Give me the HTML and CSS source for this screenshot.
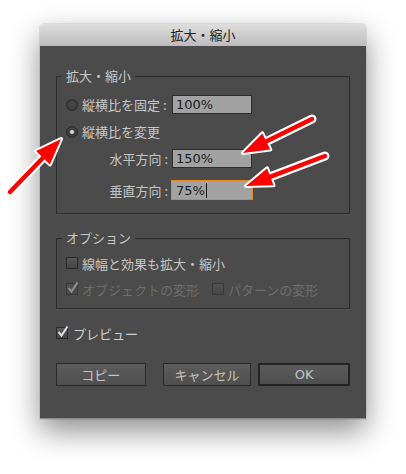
FILE: index.html
```html
<!DOCTYPE html>
<html lang="ja">
<head>
    <meta charset="UTF-8">
    <title>拡大・縮小</title>
    <link rel="stylesheet" href="styles.css">
</head>
<body>
    <div class="dialog">
        <div class="titlebar">拡大・縮小</div>
        <div class="dialog-body">
            <fieldset class="group">
                <legend>拡大・縮小</legend>
                <div class="row">
                    <span class="radio"></span>
                    <span class="label">縦横比を固定 :</span>
                    <span class="field">100%</span>
                </div>
                <div class="row row-gap">
                    <span class="radio checked"></span>
                    <span class="label">縦横比を変更</span>
                </div>
                <div class="row row-gap">
                    <span class="label indent">水平方向 :</span>
                    <span class="field">150%</span>
                </div>
                <div class="row row-last">
                    <span class="label indent">垂直方向 :</span>
                    <span class="field focused">75%<span class="caret"></span></span>
                </div>
            </fieldset>

            <fieldset class="group group-options">
                <legend>オプション</legend>
                <div class="row small">
                    <span class="check"></span>
                    <span class="label">線幅と効果も拡大・縮小</span>
                </div>
                <div class="row small disabled">
                    <span class="check">
                        <svg width="14" height="14" viewBox="0 0 14 14"><path d="M2.5 7 L5.5 10.5 L11.5 1.5" fill="none" stroke="#d8d8d8" stroke-width="2"/></svg>
                    </span>
                    <span class="label">オブジェクトの変形</span>
                    <span class="check spaced"></span>
                    <span class="label">パターンの変形</span>
                </div>
            </fieldset>

            <div class="row small preview">
                <span class="check">
                    <svg width="14" height="14" viewBox="0 0 14 14"><path d="M2.5 7 L5.5 10.5 L11.5 1.5" fill="none" stroke="#e0e0e0" stroke-width="2"/></svg>
                </span>
                <span class="label">プレビュー</span>
            </div>

            <div class="buttons">
                <div class="button copy">コピー</div>
                <div class="button cancel">キャンセル</div>
                <div class="button ok">OK</div>
            </div>
        </div>
    </div>

    <!-- callout arrows drawn over the screenshot -->
    <svg class="arrows" width="406" height="474" viewBox="0 0 406 474">
        <g stroke="#fff" stroke-linejoin="round" stroke-linecap="round" fill="#fff">
            <line x1="10" y1="192" x2="43" y2="157.7" stroke-width="9"/>
            <polygon points="61,139 49.9,164.4 36.1,151" stroke-width="4"/>
            <line x1="312" y1="119" x2="266.3" y2="141.5" stroke-width="9"/>
            <polygon points="243,153 270.3,149.6 262.3,133.4" stroke-width="4"/>
            <line x1="325" y1="156" x2="270.3" y2="176.8" stroke-width="9"/>
            <polygon points="246,186 273.5,185.2 267.1,168.4" stroke-width="4"/>
        </g>
        <g stroke="#f00" stroke-linecap="round" fill="#f00">
            <line x1="10" y1="192" x2="45" y2="155.7" stroke-width="4.5"/>
            <polygon points="61,139 49.9,164.4 36.1,151" stroke="none"/>
            <line x1="312" y1="119" x2="264" y2="142.6" stroke-width="4.5"/>
            <polygon points="243,153 270.3,149.6 262.3,133.4" stroke="none"/>
            <line x1="325" y1="156" x2="268" y2="177.7" stroke-width="4.5"/>
            <polygon points="246,186 273.5,185.2 267.1,168.4" stroke="none"/>
        </g>
    </svg>
</body>
</html>
```

FILE: styles.css
```css
body {
    box-sizing: border-box;
    min-height: 474px;
    margin: 0;
    padding: 24px 0 0 40px;
    background-color: #fff;
    font-family: "Noto Sans CJK JP", sans-serif;
    font-size: 13px;
}

.dialog {
    width: 326px;
    height: 395px;
    border-radius: 4px 4px 0 0;
    box-shadow: 0 12px 30px rgba(0, 0, 0, 0.45), 0 0 0 1px rgba(0, 0, 0, 0.08);
}

.titlebar {
    height: 22px;
    line-height: 22px;
    text-align: center;
    color: #222;
    background: linear-gradient(#dedede, #bcbcbc);
    border-radius: 4px 4px 0 0;
}

.dialog-body {
    box-sizing: border-box;
    height: 373px;
    padding: 22px 16px 0;
    background-color: #4b4b4b;
    border-bottom: 1px solid #8c8c8c;
    color: #c6c6c6;
}

.group {
    margin: 0;
    padding: 11px 9px 13px;
    border: 1px solid #2c2c2c;
    box-shadow: 0 1px 0 rgba(255, 255, 255, 0.06);
}

.group legend {
    margin-left: -4px;
    padding: 0 4px;
    line-height: 16px;
    color: #c8c8c8;
}

.group-options {
    margin-top: 16px;
    padding: 9px 9px 11px;
}

.row {
    display: flex;
    align-items: center;
    height: 19px;
}

.row-gap {
    margin-top: 8px;
}

.row-last {
    margin-top: 12px;
    height: 20px;
}

.row.small {
    height: 16px;
}

.group-options .row + .row {
    margin-top: 10px;
}

.label {
    white-space: nowrap;
}

.radio + .label {
    box-sizing: border-box;
    width: 90px;
    margin-left: 4px;
}

.label.indent {
    box-sizing: border-box;
    width: 106px;
    padding-right: 4px;
    text-align: right;
}

.radio {
    box-sizing: border-box;
    display: flex;
    align-items: center;
    justify-content: center;
    width: 12px;
    height: 12px;
    border: 1px solid #2a2a2a;
    border-radius: 50%;
    background: radial-gradient(circle at 50% 40%, #4a4a4a, #363636);
}

.radio.checked::after {
    content: "";
    width: 4px;
    height: 4px;
    border-radius: 50%;
    background-color: #dcdcdc;
}

.field {
    box-sizing: border-box;
    display: flex;
    align-items: center;
    width: 80px;
    height: 19px;
    padding-left: 3px;
    background-color: #a2a2a2;
    border: 1px solid #2d2d2d;
    color: #1c1c1c;
    font-family: "DejaVu Sans", sans-serif;
    font-size: 13px;
}

.field.focused {
    width: 82px;
    height: 20px;
    margin-left: -1px;
    padding-left: 4px;
    border-color: #e3881d;
}

.caret {
    width: 1px;
    height: 15px;
    margin-left: 1px;
    background-color: #111;
}

.check {
    box-sizing: border-box;
    position: relative;
    flex: none;
    width: 12px;
    height: 12px;
    border: 1px solid #2a2a2a;
    background: linear-gradient(#595959, #444);
}

.check svg {
    position: absolute;
    left: -1px;
    top: -3px;
}

.check + .label {
    margin-left: 4px;
}

.check.spaced {
    margin-left: 13px;
}

.disabled {
    color: #6e6e6e;
}

.disabled .check {
    opacity: 0.5;
}

.preview {
    margin-top: 16px;
    color: #d0d0d0;
}

.preview .check + .label {
    margin-left: 5px;
}

.buttons {
    display: flex;
    margin-top: 22px;
}

.button {
    box-sizing: border-box;
    height: 23px;
    line-height: 21px;
    text-align: center;
    color: #c4c4c4;
    background: linear-gradient(#5c5c5c, #4f4f4f);
    border: 1px solid #2a2a2a;
}

.copy {
    width: 90px;
}

.cancel {
    width: 89px;
    margin-left: 17px;
}

.ok {
    width: 92px;
    margin-left: 7px;
    border: 2px solid #232323;
    line-height: 19px;
    font-family: "DejaVu Sans", sans-serif;
}

.arrows {
    position: absolute;
    top: 0;
    left: 0;
    pointer-events: none;
}
```
